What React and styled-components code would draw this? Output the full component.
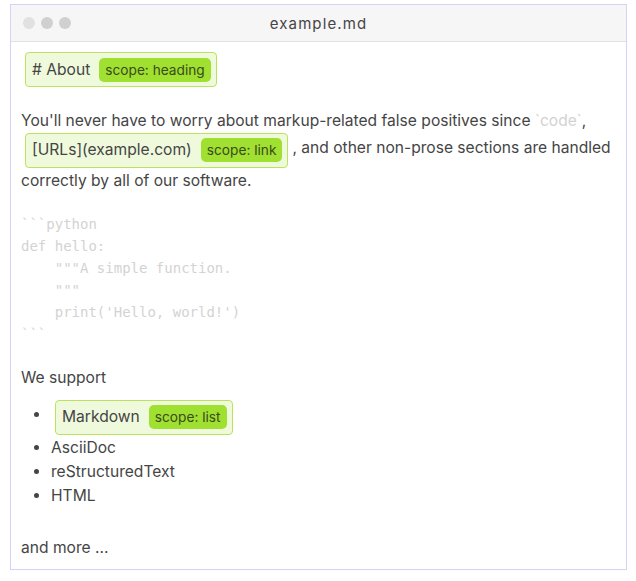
import React from "react";
import styled, { createGlobalStyle } from "styled-components";

const GlobalStyle = createGlobalStyle`
  html, body { margin: 0; padding: 0; background: #ffffff; }
  body { font-family: "Inter", "Noto Sans", sans-serif; color: #454545; }
`;

const Page = styled.div`
  padding: 4px 0 0 10px;
`;

const Window = styled.div`
  width: 617px;
  height: 566px;
  box-sizing: border-box;
  border: 1px solid #d9d0f7;
  display: flex;
  flex-direction: column;
  background: #fff;
`;

const TitleBar = styled.div`
  height: 36px;
  flex: none;
  background: #f6f6f6;
  border-bottom: 1px solid #e2e2e2;
  display: flex;
  align-items: center;
  position: relative;
  padding-left: 12px;
`;

const Dots = styled.div`
  display: flex;
  gap: 6px;
`;

const Dot = styled.span`
  width: 12px;
  height: 12px;
  border-radius: 50%;
  background: ${(p) => (p.$light ? "#e1e1e1" : "#d0d0d0")};
`;

const Title = styled.div`
  position: absolute;
  left: 0;
  right: 0;
  text-align: center;
  font-size: 15px;
  letter-spacing: 1.1px;
  color: #454545;
  pointer-events: none;
`;

const Content = styled.div`
  padding: 10px 10px 0 10px;
  font-size: 15.6px;
  line-height: 27px;
`;

const Heading = styled.div`
  display: flex;
  margin: 0 0 20px 0;
`;

const Scope = styled.span`
  display: inline-flex;
  align-items: center;
  vertical-align: -2px;
  box-sizing: border-box;
  height: 35px;
  margin: ${(p) => (p.$inline ? "-2px 4px -1px" : "0 4px")};
  padding: 0 5px 0 6px;
  gap: 9px;
  background: #effadd;
  border: 1px solid #bbe35e;
  border-radius: 4px;
  line-height: 24px;
`;

const Pill = styled.span`
  display: inline-block;
  height: 24px;
  padding: 0 6px;
  border-radius: 5px;
  background: #9fe031;
  color: #3a4a1c;
  font-size: 13.7px;
  line-height: 24px;
`;

const Paragraph = styled.p`
  margin: 0 0 ${(p) => (p.$tight ? 0 : 19)}px 0;
`;

const InlineCode = styled.span`
  color: #d2d2d2;
`;

const CodeBlock = styled.pre`
  margin: 0 0 19px 0;
  font-family: "DejaVu Sans Mono", monospace;
  font-size: 14px;
  line-height: 22px;
  color: #d3d3d3;
`;

const List = styled.ul`
  margin: 9px 0 26px 0;
  padding-left: 30px;
  line-height: 24px;
`;

const Item = styled.li`
  &:first-child {
    margin-bottom: 1px;
  }
`;

export default function App() {
  return (
    <>
      <GlobalStyle />
      <Page>
        <Window>
          <TitleBar>
            <Dots>
              <Dot $light />
              <Dot />
              <Dot />
            </Dots>
            <Title>example.md</Title>
          </TitleBar>
          <Content>
            <Heading>
              <Scope>
                # About <Pill>scope: heading</Pill>
              </Scope>
            </Heading>
            <Paragraph>
              You'll never have to worry about markup-related false positives since{" "}
              <InlineCode>`code`</InlineCode>,
              <Scope $inline>
                [URLs](example.com) <Pill>scope: link</Pill>
              </Scope>
              , and other non-prose sections are handled correctly by all of our software.
            </Paragraph>
            <CodeBlock>{"```python\ndef hello:\n    \"\"\"A simple function.\n    \"\"\"\n    print('Hello, world!')\n```"}</CodeBlock>
            <Paragraph $tight>We support</Paragraph>
            <List>
              <Item>
                <Scope>
                  Markdown <Pill>scope: list</Pill>
                </Scope>
              </Item>
              <Item>AsciiDoc</Item>
              <Item>reStructuredText</Item>
              <Item>HTML</Item>
            </List>
            <Paragraph>and more ...</Paragraph>
          </Content>
        </Window>
      </Page>
    </>
  );
}
